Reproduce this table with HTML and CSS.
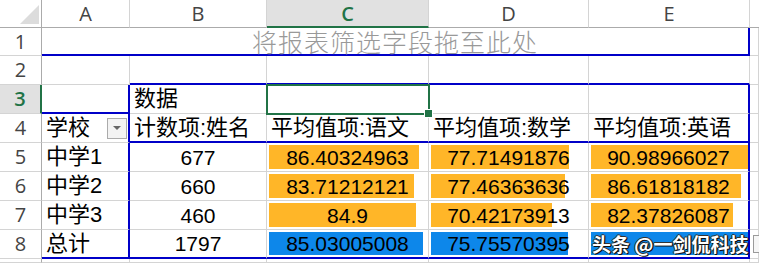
FILE: index.html
```html
<!DOCTYPE html>
<html lang="zh-CN">
<head>
<meta charset="utf-8">
<title>数据透视表</title>
<link rel="stylesheet" href="styles.css">
</head>
<body>
<div class="sheet">
  <!-- header row -->
  <div class="corner"><svg width="42" height="28" viewBox="0 0 42 28"><polygon points="20,24 39,24 39,5" fill="#dcdcdc"/></svg></div>
  <div class="hd">A</div>
  <div class="hd">B</div>
  <div class="hd hd-sel">C</div>
  <div class="hd">D</div>
  <div class="hd">E</div>
  <div class="hd hd-last"></div>

  <!-- row 1 -->
  <div class="rh">1</div>
  <div class="c merged bb br"><span class="hint">将报表筛选字段拖至此处</span></div>
  <div class="c"></div>

  <!-- row 2 -->
  <div class="rh">2</div>
  <div class="c"></div>
  <div class="c bb"></div>
  <div class="c bb"></div>
  <div class="c bb"></div>
  <div class="c bb"></div>
  <div class="c"></div>

  <!-- row 3 -->
  <div class="rh rh-sel">3</div>
  <div class="c bb br"></div>
  <div class="c txt">数据</div>
  <div class="c active"></div>
  <div class="c"></div>
  <div class="c br"></div>
  <div class="c"></div>

  <!-- row 4 -->
  <div class="rh">4</div>
  <div class="c txt br split">学校<span class="dd"><span class="tri"></span></span></div>
  <div class="c txt bb">计数项:姓名</div>
  <div class="c txt bb">平均值项:语文</div>
  <div class="c txt bb">平均值项:数学</div>
  <div class="c txt bb br">平均值项:英语</div>
  <div class="c"></div>

  <!-- row 5 -->
  <div class="rh">5</div>
  <div class="c txt br">中学1</div>
  <div class="c num">677</div>
  <div class="c num"><span class="bar" style="width:150px"></span><span class="val">86.40324963</span></div>
  <div class="c num"><span class="bar" style="width:138px"></span><span class="val">77.71491876</span></div>
  <div class="c num br"><span class="bar" style="width:157px"></span><span class="val">90.98966027</span></div>
  <div class="c"></div>

  <!-- row 6 -->
  <div class="rh">6</div>
  <div class="c txt br">中学2</div>
  <div class="c num">660</div>
  <div class="c num"><span class="bar" style="width:145px"></span><span class="val">83.71212121</span></div>
  <div class="c num"><span class="bar" style="width:134px"></span><span class="val">77.46363636</span></div>
  <div class="c num br"><span class="bar" style="width:150px"></span><span class="val">86.61818182</span></div>
  <div class="c"></div>

  <!-- row 7 -->
  <div class="rh">7</div>
  <div class="c txt br">中学3</div>
  <div class="c num">460</div>
  <div class="c num"><span class="bar" style="width:147px"></span><span class="val">84.9</span></div>
  <div class="c num"><span class="bar" style="width:121px"></span><span class="val">70.42173913</span></div>
  <div class="c num br"><span class="bar" style="width:142px"></span><span class="val">82.37826087</span></div>
  <div class="c"></div>

  <!-- row 8 -->
  <div class="rh">8</div>
  <div class="c txt bb br">总计</div>
  <div class="c num bb">1797</div>
  <div class="c num bb"><span class="bar bar-blue" style="width:154px"></span><span class="val">85.03005008</span></div>
  <div class="c num bb"><span class="bar bar-blue" style="width:137px"></span><span class="val">75.75570395</span></div>
  <div class="c num bb br"><span class="bar bar-blue" style="width:157px"></span></div>
  <div class="c"></div>

  <!-- row 9 (partial) -->
  <div class="rh"></div>
  <div class="c"></div>
  <div class="c"></div>
  <div class="c"></div>
  <div class="c"></div>
  <div class="c"></div>
  <div class="c"></div>

  <div class="watermark">头条 @一剑侃科技</div>
  <div class="paste-box"></div>
</div>
</body>
</html>
```

FILE: styles.css
```css
* { box-sizing: border-box; }

html, body {
  margin: 0;
  padding: 0;
  background: #ffffff;
  overflow: hidden;
}

.sheet {
  position: relative;
  width: 759px;
  height: 263px;
  display: grid;
  grid-template-columns: 42px 88px 137px 162px 160px 161px 1fr;
  grid-template-rows: 28px 28px 29px 29px 29px 29px 29px 29px 29px 1fr;
  font-family: "Liberation Sans", "Noto Sans CJK SC", sans-serif;
  color: #000;
  overflow: hidden;
}

.corner {
  border-right: 1px solid #ababab;
  border-bottom: 1px solid #ababab;
  background: #fff;
  line-height: 0;
}

.hd {
  display: flex;
  align-items: center;
  justify-content: center;
  border-right: 1px solid #d4d4d4;
  border-bottom: 1px solid #ababab;
  background: #fff;
  font-family: "Open Sans", "Liberation Sans", sans-serif;
  font-size: 20px;
  color: #444;
  line-height: 20px;
  padding-top: 1px;
}

.hd-sel {
  background: #e1e1e1;
  color: #217346;
  font-weight: 600;
  border-bottom: 2px solid #217346;
  padding-top: 2px;
}

.hd-last { border-right: none; }

.rh {
  display: flex;
  align-items: center;
  justify-content: center;
  border-right: 1px solid #ababab;
  border-bottom: 1px solid #d4d4d4;
  background: #fff;
  font-family: "Open Sans", "Liberation Sans", sans-serif;
  font-size: 20px;
  color: #444;
  line-height: 1;
}

.rh-sel {
  background: #e1e1e1;
  color: #217346;
  font-weight: 600;
  border-right: 2px solid #217346;
}

.c {
  position: relative;
  display: flex;
  align-items: center;
  border-right: 1px solid #d4d4d4;
  border-bottom: 1px solid #d4d4d4;
  font-size: 21px;
  line-height: 1;
  white-space: nowrap;
  min-width: 0;
}

.merged {
  grid-column: span 5;
  justify-content: center;
}

.hint {
  color: #999999;
  font-size: 25px;
  line-height: 25px;
  font-family: "Noto Sans CJK SC", sans-serif;
  font-weight: 300;
  letter-spacing: 1px;
}

.txt {
  padding-left: 4px;
  font-size: 22px;
}

.num {
  justify-content: center;
}

.split {
  justify-content: space-between;
  padding-right: 1px;
}

.bb { border-bottom: 2px solid #0000c8; }
.br { border-right: 2px solid #0000c8; }

.active {
  z-index: 2;
  outline: 2px solid #217346;
  outline-offset: -1px;
}

.active::after {
  content: "";
  position: absolute;
  right: -5px;
  bottom: -5px;
  width: 7px;
  height: 7px;
  background: #217346;
  border: 1px solid #fff;
}

.dd {
  width: 20px;
  height: 21px;
  border: 1px solid #ababab;
  background: #f3f3f3;
  display: flex;
  align-items: center;
  justify-content: center;
}

.tri {
  width: 0;
  height: 0;
  border-left: 4px solid transparent;
  border-right: 4px solid transparent;
  border-top: 4px solid #666;
}

.bar {
  position: absolute;
  left: 2px;
  top: 2px;
  bottom: 2px;
  background: #ffb628;
}

.bar-blue { background: #0d87ea; }

.val {
  position: relative;
}

.watermark {
  position: absolute;
  left: 592px;
  top: 232px;
  font-family: "Noto Sans CJK SC", sans-serif;
  font-size: 19px;
  font-weight: 700;
  line-height: 24px;
  color: #fff;
  text-shadow: 1px 1px 0 #111, -1px 0 0 #333, 0 -1px 0 #333, 1px 0 1px #000;
  white-space: nowrap;
  z-index: 3;
}

.paste-box {
  position: absolute;
  left: 753px;
  top: 235px;
  width: 14px;
  height: 18px;
  border: 1px solid #9a9a9a;
  background: #f6f6f6;
  z-index: 3;
}
```
